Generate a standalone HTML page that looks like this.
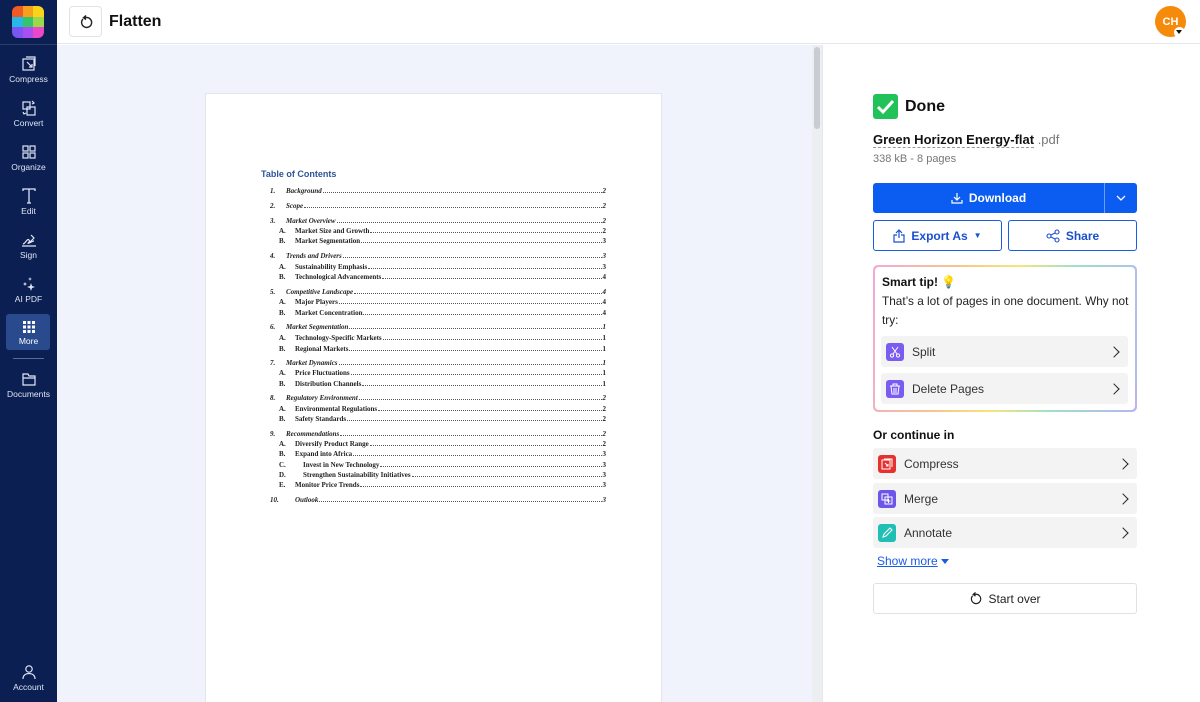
<!DOCTYPE html>
<html><head><meta charset="utf-8"><style>
*{box-sizing:border-box;margin:0;padding:0}
html,body{width:1200px;height:702px;overflow:hidden}
body{font-family:"Liberation Sans",sans-serif;background:#fff;position:relative}
.side{position:absolute;left:0;top:0;width:57px;height:702px;background:#0c1f52}
.logo{position:absolute;left:12px;top:6px;width:32px;height:32px;border-radius:6px;overflow:hidden;display:grid;grid-template-columns:repeat(3,1fr)}
.nav{position:absolute;left:0;width:57px;text-align:center;color:#dfe6f5;font-size:8.5px}
.nav svg{display:block;margin:0 auto 2px}
.top{position:absolute;left:57px;top:0;right:0;height:44px;background:#fff;border-bottom:1px solid #e4e7ee}
.main{position:absolute;left:57px;top:45px;width:765px;height:657px;background:#f0f3fb;overflow:hidden}
.sb{position:absolute;left:812px;top:45px;width:10px;height:657px;background:#eceef2}
.page{position:absolute;left:148px;top:48px;width:457px;height:620px;background:#fff;border:1px solid #e2e5ec}
.r{position:absolute;font-family:"Liberation Serif",serif;font-weight:bold;font-size:7px;color:#222;display:flex;left:270px;width:336px}
.r .l{white-space:nowrap}
.r .d{flex:1;border-bottom:1px dotted #555;margin:0 1px 2px}
.panel{position:absolute;left:822px;top:45px;width:378px;height:657px;background:#fff;border-left:1px solid #e4e7ee}
.btn{position:absolute;border:1px solid #1a5ce6;border-radius:3px;color:#1a4fd0;font-weight:bold;font-size:12px;display:flex;align-items:center;justify-content:center;gap:6px}
.item{position:absolute;background:#f3f3f4;border-radius:3px;display:flex;align-items:center;font-size:12px;color:#333}
.ic{width:18px;height:18px;border-radius:3px;margin:0 8px 0 5px;display:flex;align-items:center;justify-content:center}
.chev{position:absolute;right:10px;top:50%;margin-top:-4px;width:8px;height:8px;border-right:1.6px solid #222;border-top:1.6px solid #222;transform:rotate(45deg)}
</style></head><body>
<div class="side">
<div class="logo"><i style="background:#f25a24"></i><i style="background:#f7a01d"></i><i style="background:#fbd31b"></i><i style="background:#28b8e8"></i><i style="background:#34c56b"></i><i style="background:#9bd84a"></i><i style="background:#7a55f0"></i><i style="background:#a84ef2"></i><i style="background:#ec47c8"></i></div>
<div style="position:absolute;left:0;top:44px;width:57px;border-top:1px solid #2a3c6c"></div>
<div class="nav" style="top:56px"><svg width="16" height="16" viewBox="0 0 16 16" fill="none" stroke="#dfe6f5" stroke-width="1.2"><rect x="2" y="3" width="11" height="11"/><path d="M5 1h9v9M6 6l5 5M11 8v3H8"/></svg>Compress</div>
<div class="nav" style="top:100px"><svg width="16" height="16" viewBox="0 0 16 16" fill="none" stroke="#dfe6f5" stroke-width="1.2"><rect x="2" y="2" width="7" height="7"/><rect x="6" y="7" width="8" height="8"/><path d="M11 1l2 2-2 1M2 12l1 2 2-1"/></svg>Convert</div>
<div class="nav" style="top:144px"><svg width="16" height="16" viewBox="0 0 16 16" fill="none" stroke="#dfe6f5" stroke-width="1.2"><rect x="2" y="2" width="5" height="5"/><rect x="9" y="2" width="5" height="5"/><rect x="2" y="9" width="5" height="5"/><rect x="9" y="9" width="5" height="5"/></svg>Organize</div>
<div class="nav" style="top:188px"><svg width="16" height="16" viewBox="0 0 16 16" fill="none" stroke="#dfe6f5" stroke-width="1.3"><path d="M2 3V1h12v2M8 1v14M6 15h4"/></svg>Edit</div>
<div class="nav" style="top:232px"><svg width="16" height="16" viewBox="0 0 16 16" fill="none" stroke="#dfe6f5" stroke-width="1.2"><path d="M2 12c3-1 4-6 6-4s-3 4 0 3 3-2 5-2M10 3l3 3-5 5M1 14h14"/></svg>Sign</div>
<div class="nav" style="top:276px"><svg width="16" height="16" viewBox="0 0 16 16" fill="#dfe6f5"><path d="M10 7l1 3 3 1-3 1-1 3-1-3-3-1 3-1zM4 6l.6 1.4L6 8l-1.4.6L4 10l-.6-1.4L2 8l1.4-.6zM9 1l.5 1.5L11 3l-1.5.5L9 5l-.5-1.5L7 3l1.5-.5z"/></svg>AI PDF</div>
<div style="position:absolute;left:6px;top:314px;width:44px;height:36px;background:#2a4a8e;border-radius:3px"></div>
<div class="nav" style="top:320px;color:#fff"><svg width="14" height="14" viewBox="0 0 14 14" fill="#fff"><rect x="1" y="1" width="3" height="3"/><rect x="5.5" y="1" width="3" height="3"/><rect x="10" y="1" width="3" height="3"/><rect x="1" y="5.5" width="3" height="3"/><rect x="5.5" y="5.5" width="3" height="3"/><rect x="10" y="5.5" width="3" height="3"/><rect x="1" y="10" width="3" height="3"/><rect x="5.5" y="10" width="3" height="3"/><rect x="10" y="10" width="3" height="3"/></svg>More</div>
<div style="position:absolute;left:13px;top:358px;width:31px;border-top:1px solid #5a6a96"></div>
<div class="nav" style="top:371px"><svg width="16" height="16" viewBox="0 0 16 16" fill="none" stroke="#dfe6f5" stroke-width="1.2"><path d="M2 3h5l1 2h6v9H2zM2 7h12"/></svg>Documents</div>
<div class="nav" style="top:664px"><svg width="16" height="16" viewBox="0 0 16 16" fill="none" stroke="#dfe6f5" stroke-width="1.2"><circle cx="8" cy="5" r="3.2"/><path d="M2 15c0-4 3-5.5 6-5.5s6 1.5 6 5.5"/></svg>Account</div>
</div>
<div class="top">
<div style="position:absolute;left:12px;top:6px;width:33px;height:31px;border:1px solid #e1e3e8;border-radius:4px;display:flex;align-items:center;justify-content:center"><svg width="14" height="14" viewBox="0 0 14 14" fill="none" stroke="#222" stroke-width="1.4"><path d="M4 4a5 5 0 1 0 3-1.5"/><path d="M7 0.5L4.5 2.7 7 4.5" fill="#222"/></svg></div>
<div style="position:absolute;left:52px;top:13px;font-size:16px;font-weight:bold;color:#111">Flatten</div>
<div style="position:absolute;left:1098px;top:6px;width:31px;height:31px;border-radius:50%;background:#f58a0b;color:#fff;font-size:11px;font-weight:bold;display:flex;align-items:center;justify-content:center">CH</div>
<div style="position:absolute;left:1117px;top:27px;width:11px;height:11px;border-radius:50%;background:#fff"></div>
<div style="position:absolute;left:1119px;top:30px;border-left:3.5px solid transparent;border-right:3.5px solid transparent;border-top:4px solid #111"></div>
</div>
<div class="main"><div class="page"></div></div>
<div class="sb"><div style="position:absolute;left:2px;top:2px;width:6px;height:82px;background:#c9ccd2;border-radius:3px"></div></div>
<div style="position:absolute;left:261px;top:169px;font-size:9px;font-weight:bold;color:#2e5596">Table of Contents</div>
<div class="r" style="top:187px;font-style:italic"><span class="l" style="width:16px">1.</span><span class="l">Background</span><span class="d"></span>2</div>
<div class="r" style="top:202px;font-style:italic"><span class="l" style="width:16px">2.</span><span class="l">Scope</span><span class="d"></span>2</div>
<div class="r" style="top:217px;font-style:italic"><span class="l" style="width:16px">3.</span><span class="l">Market Overview</span><span class="d"></span>2</div>
<div class="r" style="top:227px;left:279px;width:327px"><span class="l" style="width:16px">A.</span><span class="l">Market Size and Growth</span><span class="d"></span>2</div>
<div class="r" style="top:237px;left:279px;width:327px"><span class="l" style="width:16px">B.</span><span class="l">Market Segmentation</span><span class="d"></span>3</div>
<div class="r" style="top:252px;font-style:italic"><span class="l" style="width:16px">4.</span><span class="l">Trends and Drivers</span><span class="d"></span>3</div>
<div class="r" style="top:263px;left:279px;width:327px"><span class="l" style="width:16px">A.</span><span class="l">Sustainability Emphasis</span><span class="d"></span>3</div>
<div class="r" style="top:273px;left:279px;width:327px"><span class="l" style="width:16px">B.</span><span class="l">Technological Advancements</span><span class="d"></span>4</div>
<div class="r" style="top:288px;font-style:italic"><span class="l" style="width:16px">5.</span><span class="l">Competitive Landscape</span><span class="d"></span>4</div>
<div class="r" style="top:298px;left:279px;width:327px"><span class="l" style="width:16px">A.</span><span class="l">Major Players</span><span class="d"></span>4</div>
<div class="r" style="top:309px;left:279px;width:327px"><span class="l" style="width:16px">B.</span><span class="l">Market Concentration</span><span class="d"></span>4</div>
<div class="r" style="top:323px;font-style:italic"><span class="l" style="width:16px">6.</span><span class="l">Market Segmentation</span><span class="d"></span>1</div>
<div class="r" style="top:334px;left:279px;width:327px"><span class="l" style="width:16px">A.</span><span class="l">Technology-Specific Markets</span><span class="d"></span>1</div>
<div class="r" style="top:345px;left:279px;width:327px"><span class="l" style="width:16px">B.</span><span class="l">Regional Markets</span><span class="d"></span>1</div>
<div class="r" style="top:359px;font-style:italic"><span class="l" style="width:16px">7.</span><span class="l">Market Dynamics</span><span class="d"></span>1</div>
<div class="r" style="top:369px;left:279px;width:327px"><span class="l" style="width:16px">A.</span><span class="l">Price Fluctuations</span><span class="d"></span>1</div>
<div class="r" style="top:380px;left:279px;width:327px"><span class="l" style="width:16px">B.</span><span class="l">Distribution Channels</span><span class="d"></span>1</div>
<div class="r" style="top:394px;font-style:italic"><span class="l" style="width:16px">8.</span><span class="l">Regulatory Environment</span><span class="d"></span>2</div>
<div class="r" style="top:405px;left:279px;width:327px"><span class="l" style="width:16px">A.</span><span class="l">Environmental Regulations</span><span class="d"></span>2</div>
<div class="r" style="top:415px;left:279px;width:327px"><span class="l" style="width:16px">B.</span><span class="l">Safety Standards</span><span class="d"></span>2</div>
<div class="r" style="top:430px;font-style:italic"><span class="l" style="width:16px">9.</span><span class="l">Recommendations</span><span class="d"></span>2</div>
<div class="r" style="top:440px;left:279px;width:327px"><span class="l" style="width:16px">A.</span><span class="l">Diversify Product Range</span><span class="d"></span>2</div>
<div class="r" style="top:450px;left:279px;width:327px"><span class="l" style="width:16px">B.</span><span class="l">Expand into Africa</span><span class="d"></span>3</div>
<div class="r" style="top:461px;left:279px;width:327px"><span class="l" style="width:24px">C.</span><span class="l">Invest in New Technology</span><span class="d"></span>3</div>
<div class="r" style="top:471px;left:279px;width:327px"><span class="l" style="width:24px">D.</span><span class="l">Strengthen Sustainability Initiatives</span><span class="d"></span>3</div>
<div class="r" style="top:481px;left:279px;width:327px"><span class="l" style="width:16px">E.</span><span class="l">Monitor Price Trends</span><span class="d"></span>3</div>
<div class="r" style="top:496px;font-style:italic"><span class="l" style="width:25px">10.</span><span class="l">Outlook</span><span class="d"></span>3</div>

<div class="panel"></div>
<div style="position:absolute;left:873px;top:94px;width:25px;height:25px;background:#22c25a;border-radius:3px"><svg width="25" height="25" viewBox="0 0 25 25"><path d="M5 13l5 5 10-11" fill="none" stroke="#fff" stroke-width="3"/></svg></div>
<div style="position:absolute;left:905px;top:98px;font-size:16px;font-weight:bold;color:#111">Done</div>
<div style="position:absolute;left:873px;top:132px;font-size:13px;font-weight:bold;color:#111"><span style="border-bottom:1px dashed #999">Green Horizon Energy-flat</span><span style="font-weight:normal;color:#777"> .pdf</span></div>
<div style="position:absolute;left:873px;top:153px;font-size:11px;color:#777">338 kB - 8 pages</div>
<div style="position:absolute;left:873px;top:183px;width:264px;height:30px;background:#0b5cf0;border-radius:3px;color:#fff;font-size:12px;font-weight:bold;display:flex;align-items:center">
<div style="width:231px;display:flex;justify-content:center;align-items:center;gap:6px"><svg width="12" height="12" viewBox="0 0 12 12" fill="none" stroke="#fff" stroke-width="1.2"><path d="M6 1v7M3 5l3 3 3-3M1 8v3h10V8"/></svg>Download</div>
<div style="width:1px;height:30px;background:#6e9df5"></div>
<div style="flex:1;display:flex;justify-content:center"><svg width="10" height="6" viewBox="0 0 10 6" fill="none" stroke="#fff" stroke-width="1.3"><path d="M1 1l4 4 4-4"/></svg></div></div>
<div class="btn" style="left:873px;top:220px;width:129px;height:31px"><svg width="12" height="14" viewBox="0 0 12 14" fill="none" stroke="#1a4fd0" stroke-width="1.2"><path d="M6 1v8M3 4l3-3 3 3M4 6H1v7h10V6H8"/></svg>Export As <span style="font-size:8px">▼</span></div>
<div class="btn" style="left:1008px;top:220px;width:129px;height:31px"><svg width="14" height="14" viewBox="0 0 14 14" fill="none" stroke="#1a4fd0" stroke-width="1.1"><circle cx="3" cy="7" r="2"/><circle cx="11" cy="3" r="2"/><circle cx="11" cy="11" r="2"/><path d="M5 6l4-2M5 8l4 2"/></svg>Share</div>
<div style="position:absolute;left:873px;top:265px;width:264px;height:147px;border-radius:5px;padding:2px;background:linear-gradient(100deg,#f3a8d8,#f7c58a 30%,#f3e67a 50%,#9ee0c8 70%,#b8b4f4)"><div style="background:#fff;width:100%;height:100%;border-radius:4px"></div></div>
<div style="position:absolute;left:882px;top:275px;font-size:12px;font-weight:bold;color:#111">Smart tip! <span style="color:#f4d04a;font-weight:normal">💡</span></div>
<div style="position:absolute;left:882px;top:292px;font-size:11.8px;white-space:nowrap;line-height:19px;color:#222">That’s a lot of pages in one document. Why not<br>try:</div>
<div class="item" style="left:881px;top:336px;width:247px;height:31px"><div class="ic" style="background:#7a5cf0"><svg width="12" height="12" viewBox="0 0 12 12" fill="none" stroke="#fff" stroke-width="1"><circle cx="3" cy="9.5" r="1.6"/><circle cx="9" cy="9.5" r="1.6"/><path d="M4 8l5-7M8 8L3 1"/></svg></div>Split<span class="chev"></span></div>
<div class="item" style="left:881px;top:373px;width:247px;height:31px"><div class="ic" style="background:#7a5cf0"><svg width="12" height="12" viewBox="0 0 12 12" fill="none" stroke="#fff" stroke-width="1"><path d="M1 3h10M4 3V1h4v2M2 3l1 8h6l1-8M5 5v5M7 5v5"/></svg></div>Delete Pages<span class="chev"></span></div>
<div style="position:absolute;left:873px;top:428px;font-size:12px;font-weight:bold;color:#111">Or continue in</div>
<div class="item" style="left:873px;top:448px;width:264px;height:31px"><div class="ic" style="background:#e5312f"><svg width="12" height="12" viewBox="0 0 12 12" fill="none" stroke="#fff" stroke-width="1"><rect x="1" y="2" width="8" height="9"/><path d="M3 1h8v8M4 5l3 3M7 6v2H5"/></svg></div>Compress<span class="chev"></span></div>
<div class="item" style="left:873px;top:483px;width:264px;height:31px"><div class="ic" style="background:#6c55e8"><svg width="12" height="12" viewBox="0 0 12 12" fill="none" stroke="#fff" stroke-width="1"><rect x="1" y="1" width="6" height="6"/><rect x="4" y="4" width="7" height="7"/><path d="M7.5 6v4M5.5 8h4"/></svg></div>Merge<span class="chev"></span></div>
<div class="item" style="left:873px;top:517px;width:264px;height:31px"><div class="ic" style="background:#1fbfb5"><svg width="12" height="12" viewBox="0 0 12 12" fill="none" stroke="#fff" stroke-width="1.1"><path d="M2 10l1-3 6-6 2 2-6 6z"/></svg></div>Annotate<span class="chev"></span></div>
<div style="position:absolute;left:877px;top:554px;font-size:12px;color:#1a5ce6;text-decoration:underline">Show more</div>
<div style="position:absolute;left:941px;top:559px;border-left:4px solid transparent;border-right:4px solid transparent;border-top:5px solid #1a5ce6"></div>
<div style="position:absolute;left:873px;top:583px;width:264px;height:31px;border:1px solid #dfe1e6;border-radius:3px;display:flex;align-items:center;justify-content:center;gap:6px;font-size:12px;color:#222"><svg width="13" height="13" viewBox="0 0 14 14" fill="none" stroke="#222" stroke-width="1.3"><path d="M4 4a5 5 0 1 0 3-1.5"/><path d="M7 0.5L4.5 2.7 7 4.5" fill="#222"/></svg>Start over</div>
</body></html>
